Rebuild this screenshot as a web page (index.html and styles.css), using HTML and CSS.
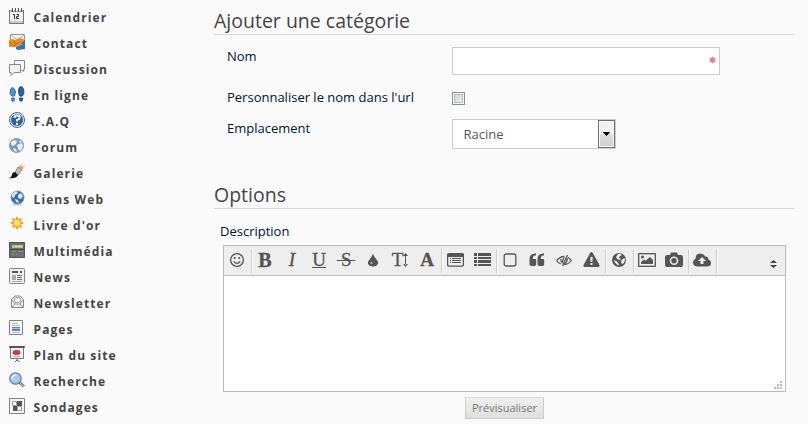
FILE: index.html
```html
<!DOCTYPE html>
<html lang="fr">
<head>
<meta charset="utf-8">
<title>Ajouter une catégorie</title>
<link rel="stylesheet" href="styles.css">
</head>
<body>
<div class="page">
<nav class="menu">
<a><svg viewBox="0 0 16 16"><path fill="#777" d="M0 2h15v14H0z"/><path fill="#f1f1ef" d="M1 4h13v9H1z"/><path fill="#c8c8c6" d="M1 13h13v2H1z"/><path fill="#aaa" d="M1 2h13v2H1z"/><path stroke="#555" d="M3.500 0v4M6.500 0v4M9.500 0v4M12.500 0v4"/><path stroke="#fff" d="M4.500 1v2M7.500 1v2M10.500 1v2"/><path stroke="#333" fill="none" d="M4 6.500h1.500V11M7.500 6.500h2v2h-2v2H10"/></svg>Calendrier</a>
<a><svg viewBox="0 0 16 16"><path fill="#f4f2ed" stroke="#999" d="M1.500.5h14v10h-14z"/><path stroke="#aaa" fill="none" d="M2 1l6.500 5L15 1"/><path fill="#3b6ead" d="M7 11q3-3 9-5v9l-7 1-2-1z"/><path fill="#e89129" d="M0 6q3-2 6 0l4-2 5 1-1 3-6 5-8 0z"/><path stroke="#a95010" stroke-width=".7" fill="none" d="M0 8l5 4 5-4M5 7l1 3"/><path stroke="#86abd6" d="M9 12l5-2"/></svg>Contact</a>
<a><svg viewBox="0 0 16 16"><path fill="#f6f6f6" stroke="#888" d="M5.500.5h10v9h-1v2l-3-2h-6z"/><path fill="#f2f2f2" stroke="#888" d="M.5 4.500h11v8H5l-3 3v-3H.5z"/></svg>Discussion</a>
<a><svg viewBox="0 0 16 16"><path fill="#528bc6" stroke="#3970ad" d="M1.500 3q2-3 4 0l1 3-1 4h-3L1 7z"/><path fill="#528bc6" stroke="#3970ad" d="M2.500 12h3l-.5 3H3z"/><path fill="#2d61a3" stroke="#244f8c" d="M10 2q2-3 4 0l1 4-1.500 4h-3L9.500 6zM10.500 12h3l-.5 3h-2z"/></svg>En ligne</a>
<a><svg viewBox="0 0 16 16"><circle cx="8" cy="8" r="7.500" fill="#e5edf7" stroke="#41699f"/><circle cx="8" cy="8" r="6" fill="#315f9f"/><path stroke="#fff" stroke-width="1.800" fill="none" d="M5.500 6q0-2.500 2.700-2.500 2.500 0 2.500 2Q10.500 7.500 8 8v1.500"/><path fill="#fff" d="M7 11h2v2H7z"/></svg>F.A.Q</a>
<a><svg viewBox="0 0 16 16"><circle cx="7.500" cy="7.500" r="7" fill="#779ac4" stroke="#8d9aa9"/><path fill="#e8edf0" d="M2 4l3-2 3 1-1 3-3 2-2-1zM8 7l4-2 2 2-1 4-2 2-2-2zM4 10l3 1 1 3-3-1zM10 2l3 2-2 1z"/></svg>Forum</a>
<a><svg viewBox="0 0 16 16"><path fill="#e8a451" d="M11 1l4 1-2 4-4-2z"/><path fill="#f8e5b0" d="M13 0l3 1-1 2-3-1z"/><path fill="#b9bdc0" stroke="#666" stroke-width=".6" d="M9 3l4 3-4 5-3-3z"/><path fill="#151515" d="M6 8l3 3q-2 4-9 3 3-1 3-4 1-2 3-2"/></svg>Galerie</a>
<a><svg viewBox="0 0 16 16"><ellipse cx="8" cy="14.500" rx="5" ry="1" fill="#ccc"/><circle cx="8.500" cy="7.500" r="6.500" fill="#366fae" stroke="#7892ad"/><path fill="#dce8f1" d="M3 4l4-3 2 2-3 2-1 3-2-1zM9 5l3-2 2 3-2 3-3-1zM6 9l3 1 1 3-3-1z"/></svg>Liens Web</a>
<a><svg viewBox="0 0 16 16"><path fill="#f39b28" d="M8 0l1.500 3L13 2l-1 3.200L15 7l-3 1.800 1 3.200-3.500-1L8 14l-1.500-3L3 12l1-3.200L1 7l3-1.800L3 2l3.500 1z"/><circle cx="8" cy="7" r="3.800" fill="#ffe36c" stroke="#f1aa31"/></svg>Livre d'or</a>
<a><svg viewBox="0 0 16 16"><path fill="#6d716d" stroke="#505450" d="M.5.5h15v15H.5z"/><path fill="#b8bd83" d="M3 3h11v3H3z"/><path stroke="#e0e2ac" d="M6 4.500h7"/><path fill="#464a47" d="M1 7h14v1H1z"/><path stroke="#8b918b" d="M3 9.500h4M9 9.500h5M3 12.500h2M7 12.500h1"/></svg>Multimédia</a>
<a><svg viewBox="0 0 16 16"><rect x=".5" y=".5" width="15" height="15" rx="1" fill="#eee" stroke="#858585"/><path stroke="#555" stroke-width="2" d="M3 4h6M11 4h2"/><path fill="#aaa" d="M3 7h4v5H3z"/><path stroke="#777" d="M8 7.500h5M8 9.500h5M8 11.500h5"/><path stroke="#aaa" d="M3 13.500h10"/></svg>News</a>
<a><svg viewBox="0 0 16 16"><path fill="#f5f5f5" stroke="#888" d="M2.500 5.500L6 2h5l3.500 3.500v8h-12z"/><path fill="none" stroke="#999" d="M3 6l3 4-3 3M14 6l-3 4 3 3M6 10h5"/><ellipse cx="8.500" cy="6" rx="3.500" ry="2.500" fill="#fff" stroke="#999"/></svg>Newsletter</a>
<a><svg viewBox="0 0 16 16"><path fill="#f7f7f7" stroke="#818181" d="M.5.500h13v14H.5z"/><path stroke="#bbb" d="M3 3.500h6M3 5.500h8M3 12.500h8"/><path fill="#5a83b9" d="M3 7h8v4H3z"/><path stroke="#a8c1df" d="M3 8.500h8"/></svg>Pages</a>
<a><svg viewBox="0 0 16 16"><path fill="#f5f5f5" stroke="#777" d="M1.500 2v10.500h13V2"/><path fill="#777" stroke="#555" d="M.5.5h15v1H.5z"/><ellipse cx="7.500" cy="6.500" rx="4" ry="2.500" fill="#d93434"/><path fill="#4e79ad" d="M8 6l3-2v3z"/><path stroke="#aaa" d="M4 10.500h7"/><path stroke="#666" fill="none" d="M8 13v1l-2 2M8 14l3 2"/></svg>Plan du site</a>
<a><svg viewBox="0 0 16 16"><path stroke="#777" stroke-width="3" d="M10.500 10.500l4.500 4"/><path stroke="#ccc" d="M11 11l4 3.500"/><circle cx="6.500" cy="6.500" r="5.700" fill="#a9c9ef" stroke="#718298" stroke-width="1.300"/><path stroke="#e4f1ff" stroke-width="1.500" fill="none" d="M3 7q0-4 4-4"/></svg>Recherche</a>
<a><svg viewBox="0 0 16 16"><path fill="#f5f5f5" stroke="#818181" d="M.5.500h15v15H.5z"/><path fill="#555" d="M8 3h5v5H8zM4 8h4v5H4z"/><path fill="#fff" stroke="#999" d="M3.500 3.500h4v4h-4zM8.500 8.500h4v4h-4z"/></svg>Sondages</a>
</nav>
<main class="content">
<h1>Ajouter une catégorie</h1>
<div class="row name"><label>Nom</label><div class="field"><svg class="required" viewBox="0 0 8 8"><path stroke="#dc8585" stroke-width="2.200" d="M4 .3v7.400M.8 2.200l6.400 3.600M.8 5.800l6.400-3.600"/></svg></div></div>
<div class="row url"><label>Personnaliser le nom dans l'url</label><span class="checkbox"></span></div>
<div class="row place"><label>Emplacement</label><div class="select"><span>Racine</span><span class="arrow"><svg viewBox="0 0 7 4"><path d="M0 0h7v1H6v1H5v1H4v1H3V3H2V2H1V1H0z"/></svg></span></div></div>
<h1 class="options">Options</h1>
<div class="description">Description</div>
<div class="editor">
<div class="toolbar">
<span class="tool"><svg viewBox="0 0 16 16"><circle cx="8" cy="8" r="6.400" class="line"/><circle cx="5.800" cy="6" r="1.100"/><circle cx="10.200" cy="6" r="1.100"/><path class="line" d="M4.700 9.300q3.300 4 6.600 0"/></svg></span><i class="sep"></i>
<span class="tool letter bold">B</span>
<span class="tool letter italic">I</span>
<span class="tool letter under">U</span>
<span class="tool letter strike">&nbsp;S&nbsp;</span>
<span class="tool"><svg viewBox="0 0 16 16"><path d="M8 1.500q.7 2.700 3 5.500 2.700 2.600 2 4.500-1 3-5 3t-5-3Q2.500 9.500 5 7q2.300-3 3-5.500"/><circle cx="6.400" cy="11" r="1.100" fill="#bbb"/></svg></span>
<span class="tool letter size">T<svg viewBox="0 0 5 14"><path d="M2 2h1v10H2zM0 3l2.500-3L5 3zM0 11l2.500 3L5 11z"/></svg></span>
<span class="tool letter font">A</span><i class="sep"></i>
<span class="tool"><svg class="wide" viewBox="0 0 17 16"><rect class="line" x=".6" y="1.600" width="15.800" height="12.500" rx="1.300"/><path d="M0 2h17v3H0zM3 6h1v1H3zM5 6h9v1H5zM3 8h1v1H3zM5 8h9v1H5zM3 10h1v1H3zM5 10h9v1H5z"/></svg></span>
<span class="tool"><svg class="wide" viewBox="0 0 17 16"><path d="M0 1h3v3H0zm4 0h13v3H4zM0 5h3v2H0zm4 0h13v2H4zM0 8h3v3H0zm4 0h13v3H4zM0 12h3v2H0zm4 0h13v2H4z"/></svg></span><i class="sep"></i>
<span class="tool"><svg viewBox="0 0 16 16"><rect class="line" x="2.200" y="2" width="11.600" height="12" rx="2"/></svg></span>
<span class="tool"><svg viewBox="0 0 16 16"><path id="quote" d="M7 1.500v2H6Q3.800 3.800 3.800 7H6q1.200 0 1.200 1.200v4Q7.200 14 5.500 14H2.300Q.5 14 .5 12.200V7.500Q.5 1.500 6 1.500z"/><use href="#quote" x="8"/></svg></span>
<span class="tool"><svg viewBox="0 0 16 16"><path class="line" d="M.7 8.500Q4 4.500 8.500 4.500M5 12Q2 11 .7 8.500M8 12.500q4.500 0 7.300-4Q14 6.500 12 5.500M5 7q-.5 3 2 4M11 6q1 4-3 6"/><path class="line" d="M11.500 3l-5 11M8 5.500l-2 5"/></svg></span>
<span class="tool"><svg class="wide" viewBox="0 0 17 16"><path d="M8.500 0q.8 0 1.200.8l6.800 12.300q.4 1.900-1 1.900h-14q-1.400 0-1-1.900L7.300.8Q7.700 0 8.500 0"/><path fill="#eee" d="M7.300 5h2.400l-.3 5H7.600zM7.500 11h2v2h-2z"/></svg></span><i class="sep"></i>
<span class="tool"><svg viewBox="0 0 16 16"><circle cx="8" cy="8" r="7"/><path fill="#eee" d="M7 2l2-.5 2 1.500-2 1-1 2 2 1-1 1-3-1-1-2zM10.500 8l3-2 .5 2-1 3-2 1-1-2zM3 8l3 1.500 2 3-1 1-3-3z"/></svg></span><i class="sep"></i>
<span class="tool"><svg class="camera" viewBox="0 0 18 16"><rect class="line" x=".7" y="1.700" width="16.600" height="12.600"/><circle cx="4.500" cy="5" r="1.500"/><path d="M3 12v-2l3-2.500 1.500 1.300L12 5l3 3v4z"/></svg></span>
<span class="tool"><svg class="camera" viewBox="0 0 18 16"><path fill-rule="evenodd" d="M2 3h3l1-2.500h6L13 3h3q2 0 2 2v8q0 2-2 2H2q-2 0-2-2V5q0-2 2-2m7 1.500a4.300 4.300 0 1 0 0 8.600 4.300 4.300 0 0 0 0-8.600"/><circle cx="9" cy="8.800" r="2.700"/></svg></span><i class="sep"></i>
<span class="tool"><svg class="camera" viewBox="0 0 18 16"><path d="M4 14.500Q0 14 0 10.500 0 8 2.600 6.800 2.300 1.500 7.500 1.500q3.300 0 4.500 3 3.300-.5 3.300 3Q18 8 18 11q0 3.500-4 3.500z"/><path fill="#eee" d="M9 5l4 4h-2.500v3h-3V9H5z"/></svg></span><i class="sep"></i>
<span class="more"><svg viewBox="0 0 7 8"><path d="M0 3l3.500-3L7 3zM0 5h7L3.500 8z"/></svg></span>
</div>
<div class="textarea"><svg class="grip" viewBox="0 0 8 8"><path d="M6 0h2v2H6zM3 3h2v2H3zm3 0h2v2H6zM0 6h2v2H0zm3 0h2v2H3zm3 0h2v2H6z"/></svg></div>
</div>
<button class="preview">Prévisualiser</button>
</main>
</div>
</body>
</html>
```
FILE: styles.css
```css
* { box-sizing: border-box; }
body { margin: 0; background: #fafafa; font-family: "Open Sans", sans-serif; font-size: 13px; color: #444; overflow: hidden; }
.page { display: flex; height: 424px; }
.menu { width: 214px; padding: 4px 0 0 9px; flex: none; }
.menu a { display: flex; height: 26px; font-size: 12px; line-height: 27px; font-weight: 700; letter-spacing: 1.1px; white-space: nowrap; }
.menu svg { width: 16px; height: 16px; margin: 4px 8.500px 0 0; flex: none; }
.content { width: 581px; }
h1 { margin: 0; height: 35px; padding-top: 7px; border-bottom: 1px solid #d9d9d9; font-weight: 400; font-size: 19.500px; line-height: 28px; color: #444; }
.row { display: flex; padding-left: 13px; color: #001530; }
.row label { width: 225px; line-height: 18px; }
.name { padding-top: 12px; height: 53px; }
.field { display: flex; justify-content: flex-end; align-items: center; width: 268px; height: 28px; border: 1px solid #ccc; background: #fff; padding: 0 3px 2px 0; }
.required { width: 7px; height: 8px; }
.url { height: 31px; }
.checkbox { width: 13px; height: 13px; margin-top: 4px; border: 1px solid #8e8f8f; background: linear-gradient(135deg, #c9cdd4, #f5f5f5); box-shadow: inset 0 0 0 1px #f7f7f7, inset 0 0 0 2px #b9bcc0; }
.place { height: 62px; }
.select { display: flex; width: 164px; height: 30px; border: 1px solid #ccc; background: #fff; color: #555; padding-left: 10.500px; line-height: 29px; }
.select > span:first-child { flex: 1; }
.arrow { display: flex; align-items: center; justify-content: center; width: 17px; height: 28px; border: 1px solid #707070; box-shadow: inset 0 0 0 1px #f7f7f7; background: linear-gradient(#f2f2f2 50%, #ddd 50%, #cfcfcf); }
.arrow svg { width: 7px; height: 4px; }
.options { height: 28px; padding-top: 0; }
.description { padding: 13px 0 0 6px; height: 36px; line-height: 18px; color: #001530; }
.editor { width: 563px; height: 147px; margin-left: 9px; border: 1px solid #bbb; background: #fff; }
.toolbar { display: flex; height: 30px; background: #eee; border-bottom: 1px solid #bbb; color: #555; }
.tool { width: 27px; height: 28px; padding-right: 1px; display: flex; align-items: center; justify-content: center; flex: none; }
.tool svg { width: 16px; height: 16px; fill: #555; flex: none; }
.tool .line { fill: none; stroke: #555; stroke-width: 1.3; }
.tool svg.wide { width: 17px; }
.tool svg.camera { width: 18px; }
.sep { width: 1px; height: 24px; margin-top: 3px; background: #ccc; box-shadow: 1px 0 #fff; }
.letter { font-family: "Liberation Serif", serif; font-size: 19px; line-height: 28px; -webkit-text-stroke: .3px #555; }
.bold, .font { font-weight: 700; }
.bold { font-size: 20px; }
.italic { font-style: italic; }
.under { text-decoration: underline; text-decoration-thickness: 1px; }
.strike { text-decoration: line-through; text-decoration-thickness: 1px; letter-spacing: -.5px; }
.tool.size svg { width: 5px; height: 14px; }
.more { margin: 14px 8px 0 auto; height: 8px; display: flex; }
.more svg { width: 7px; height: 8px; fill: #444; }
.textarea { display: flex; height: 115px; align-items: flex-end; justify-content: flex-end; padding: 2px 3px; }
.grip { width: 8px; height: 8px; fill: #bbb; }
.preview { display: block; margin: 5px 0 0 251px; width: 79px; height: 22px; padding: 0 0 1px; border: 1px solid #ccc; border-top-color: #ddd; background: linear-gradient(#f0f0f0, #dedede); font: 11px "Open Sans", sans-serif; color: #777; }
```
